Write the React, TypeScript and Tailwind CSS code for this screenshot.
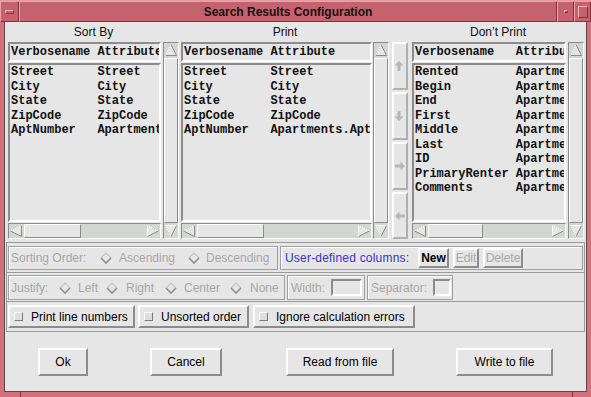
import React from "react";

const RAISED = "border-2 border-t-white border-l-white border-r-[#8c8c8c] border-b-[#8c8c8c]";
const RAISED1 = "border border-t-white border-l-white border-r-[#8c8c8c] border-b-[#8c8c8c]";
const SUNKEN = "border-2 border-t-[#8c8c8c] border-l-[#8c8c8c] border-r-white border-b-white";
const SUNKEN1 = "border border-t-[#8c8c8c] border-l-[#8c8c8c] border-r-white border-b-white";
const PANEL = "border border-[#a0a0a0] shadow-[inset_1px_1px_0_#ffffff]";
const MONO = "font-['Liberation_Mono',monospace] text-[12px] font-bold text-[#111111]";

type Dir = "up" | "down" | "left" | "right";

function Tri({ dir }: { dir: Dir }) {
  const map = {
    up: { pts: "7,1.5 12.5,12.5 1.5,12.5", light: "M1.5,12.5 L7,1.5" },
    down: { pts: "1.5,1.5 12.5,1.5 7,12.5", light: "M1.5,1.5 L12.5,1.5 M1.5,1.5 L7,12.5" },
    left: { pts: "1.5,7 12.5,1.5 12.5,12.5", light: "M1.5,7 L12.5,1.5" },
    right: { pts: "1.5,1.5 12.5,7 1.5,12.5", light: "M1.5,12.5 L1.5,1.5 L12.5,7" },
  }[dir];
  return (
    <svg width="14" height="14" viewBox="0 0 14 14" className="block shrink-0">
      <polygon points={map.pts} fill="#e6e6e6" stroke="#8c8c8c" strokeWidth="1" />
      <path d={map.light} stroke="#ffffff" strokeWidth="1" fill="none" />
    </svg>
  );
}

function VScroll() {
  return (
    <div className={`w-[16px] h-full flex flex-col bg-[#d3d6d3] ${SUNKEN1}`}>
      <Tri dir="up" />
      <div className={`flex-1 my-[1px] bg-[#e6e6e6] ${RAISED1}`} />
      <Tri dir="down" />
    </div>
  );
}

function HScroll({ slider }: { slider: string }) {
  return (
    <div className={`h-[16px] flex bg-[#d3d6d3] ${SUNKEN1}`}>
      <Tri dir="left" />
      <div className={`${slider} ml-[1px] bg-[#e6e6e6] ${RAISED1}`} />
      <div className="flex-1" />
      <Tri dir="right" />
    </div>
  );
}

function ListCol({
  w,
  col,
  rows,
  slider,
}: {
  w: string;
  col: number;
  rows: [string, string][];
  slider: string;
}) {
  return (
    <div className={`${w} h-full flex flex-col`}>
      <div className={`h-[20px] ${SUNKEN} flex items-center pl-[1px] overflow-hidden whitespace-pre ${MONO}`}>
        {"Verbosename".padEnd(col) + "Attribute"}
      </div>
      <div className={`mt-[1px] flex-1 ${SUNKEN} pl-[1px] overflow-hidden ${MONO}`}>
        {rows.map(([a, b]) => (
          <div key={a} className="h-[14.5px] leading-[14.5px] whitespace-pre">
            {a.padEnd(col) + b}
          </div>
        ))}
      </div>
      <div className="mt-[1px]">
        <HScroll slider={slider} />
      </div>
    </div>
  );
}

function Diamond() {
  return (
    <svg width="12" height="12" viewBox="0 0 12 12" className="block shrink-0">
      <polygon points="6,1 11,6 6,11 1,6" fill="#e6e6e6" />
      <path d="M1,6 L6,1 L11,6" stroke="#c4c4c4" strokeWidth="1.2" fill="none" />
      <path d="M1,6 L6,11 L11,6" stroke="#8e8e8e" strokeWidth="1.6" fill="none" />
    </svg>
  );
}

function MoveArrow({ dir }: { dir: Dir }) {
  const paths = {
    up: "M5,1 L9.5,5.5 L6.5,5.5 L6.5,11 L3.5,11 L3.5,5.5 L0.5,5.5 Z",
    down: "M5,11 L9.5,6.5 L6.5,6.5 L6.5,1 L3.5,1 L3.5,6.5 L0.5,6.5 Z",
    right: "M11,6 L6.5,1.5 L6.5,4.5 L1,4.5 L1,7.5 L6.5,7.5 L6.5,10.5 Z",
    left: "M1,6 L5.5,1.5 L5.5,4.5 L11,4.5 L11,7.5 L5.5,7.5 L5.5,10.5 Z",
  };
  return (
    <svg width="12" height="12" viewBox="0 0 12 12" className="block">
      <path d={paths[dir]} fill="#b6b6b6" />
    </svg>
  );
}

function MoveBtn({ dir, h }: { dir: Dir; h: string }) {
  return (
    <div
      className={`${h} w-[16px] flex items-center justify-center border-2 border-t-white border-l-white border-r-[#b0b0b0] border-b-[#b0b0b0]`}
    >
      <MoveArrow dir={dir} />
    </div>
  );
}

function Toggle({ w, label, ml }: { w: string; label: string; ml: string }) {
  return (
    <div className={`${w} ${ml} h-[23px] flex items-center ${RAISED} text-[#000000]`}>
      <div className="ml-[4px] w-[9px] h-[9px] border border-t-white border-l-white border-r-[#7c7c7c] border-b-[#7c7c7c] bg-[#dedede]" />
      <span className="ml-[8px] whitespace-nowrap">{label}</span>
    </div>
  );
}

function BigBtn({ w, ml, label }: { w: string; ml: string; label: string }) {
  return (
    <div className={`${w} ${ml} h-[28px] flex items-center justify-center ${RAISED} text-[#000000]`}>
      {label}
    </div>
  );
}

const sortRows: [string, string][] = [
  ["Street", "Street"],
  ["City", "City"],
  ["State", "State"],
  ["ZipCode", "ZipCode"],
  ["AptNumber", "Apartments.AptNumber"],
];

const dontRows: [string, string][] = [
  ["Rented", "Apartments.Rented"],
  ["Begin", "Apartments.Begin"],
  ["End", "Apartments.End"],
  ["First", "Apartments.First"],
  ["Middle", "Apartments.Middle"],
  ["Last", "Apartments.Last"],
  ["ID", "Apartments.ID"],
  ["PrimaryRenter", "Apartments.PrimaryRenter"],
  ["Comments", "Apartments.Comments"],
];

export default function App() {
  return (
    <div className="w-[591px] h-[397px] bg-[#d46f7b] flex flex-col font-['Liberation_Sans',Arial,sans-serif] text-[12px] overflow-hidden select-none">
      {/* Title bar */}
      <div className="h-[22px] shrink-0 flex bg-[#c4626d] border-t border-[#e79aa3]">
        <div className="w-[19px] h-full flex items-center justify-center border border-t-[#eaa2ab] border-l-[#eaa2ab] border-r-[#86323c] border-b-[#86323c]">
          <div className="w-[9px] h-[4px] border border-t-[#f0b4bb] border-l-[#f0b4bb] border-r-[#86323c] border-b-[#86323c]" />
        </div>
        <div className="flex-1 flex items-center justify-center font-bold text-[#1a1010] border border-t-[#eaa2ab] border-l-[#eaa2ab] border-r-[#86323c] border-b-[#86323c]">
          Search Results Configuration
        </div>
        <div className="w-[17px] h-full flex items-center justify-center border border-t-[#eaa2ab] border-l-[#eaa2ab] border-r-[#86323c] border-b-[#86323c]">
          <div className="w-[4px] h-[3px] border border-t-[#f0b4bb] border-l-[#f0b4bb] border-r-[#86323c] border-b-[#86323c]" />
        </div>
        <div className="w-[17px] h-full flex items-center justify-center border border-t-[#eaa2ab] border-l-[#eaa2ab] border-r-[#86323c] border-b-[#86323c]">
          <div className="w-[10px] h-[12px] border border-t-[#f0b4bb] border-l-[#f0b4bb] border-r-[#86323c] border-b-[#86323c]" />
        </div>
      </div>

      {/* Body */}
      <div className="flex-1 flex flex-col px-[4px]">
        <div className="flex-1 flex flex-col bg-[#e6e6e6] border-l border-r border-b border-[#5a4a4c]">
          {/* Lists */}
          <div className="flex pl-[3px] text-[#111111]">
            <div className="w-[171px] flex flex-col">
              <div className="h-[20px] flex items-center justify-center">Sort By</div>
              <div className="h-[197px] flex">
                <ListCol w="w-[153px]" col={12} rows={sortRows} slider="w-[57px]" />
                <div className="ml-[2px] h-full">
                  <VScroll />
                </div>
              </div>
            </div>
            <div className="ml-[2px] w-[208px] flex flex-col">
              <div className="h-[20px] flex items-center justify-center">Print</div>
              <div className="h-[197px] flex">
                <ListCol w="w-[191px]" col={12} rows={sortRows} slider="w-[67px]" />
                <div className="ml-[1px] h-full">
                  <VScroll />
                </div>
              </div>
            </div>
            <div className="ml-[3px] w-[16px] flex flex-col pt-[20px]">
              <div className="h-[197px] flex flex-col gap-[2px]">
                <MoveBtn dir="up" h="h-[48px]" />
                <MoveBtn dir="down" h="h-[48px]" />
                <MoveBtn dir="right" h="h-[48px]" />
                <MoveBtn dir="left" h="h-[47px]" />
              </div>
            </div>
            <div className="ml-[4px] w-[172px] flex flex-col">
              <div className="h-[20px] flex items-center justify-center">Don’t Print</div>
              <div className="h-[197px] flex">
                <ListCol w="w-[154px]" col={14} rows={dontRows} slider="w-[55px]" />
                <div className="ml-[2px] h-full">
                  <VScroll />
                </div>
              </div>
            </div>
          </div>

          {/* Lower option rows */}
          <div className="mt-[3px] mx-[1px] border-t border-l border-r border-[#9a9a9a]">
            {/* Row 1 */}
            <div className="flex pl-[1px] pt-[3px] pb-[2px] border-b border-[#9a9a9a]">
              <div className={`w-[270px] h-[24px] flex items-center ${PANEL} text-[#a6a6a6]`}>
                <span className="ml-[2px] w-[89px] whitespace-nowrap">Sorting Order:</span>
                <span className="w-[19px]"><Diamond /></span>
                <span className="w-[69px]">Ascending</span>
                <span className="w-[18px]"><Diamond /></span>
                <span className="whitespace-nowrap">Descending</span>
              </div>
              <div className={`ml-[2px] w-[303px] h-[24px] flex items-center ${PANEL}`}>
                <span className="ml-[4px] w-[133px] whitespace-nowrap text-[#3434c4] tracking-[0.2px]">User-defined columns:</span>
                <div className={`w-[31px] h-[20px] flex items-center justify-center ${RAISED} font-bold text-[#000000]`}>New</div>
                <div className={`ml-[4px] w-[26px] h-[20px] flex items-center justify-center ${RAISED} text-[#a6a6a6]`}>Edit</div>
                <div className={`ml-[4px] w-[40px] h-[20px] flex items-center justify-center ${RAISED} text-[#a6a6a6]`}>Delete</div>
              </div>
            </div>
            {/* Row 2 */}
            <div className="flex pl-[1px] pt-[2px] pb-[1px] border-b border-[#9a9a9a] text-[#a6a6a6]">
              <div className={`w-[277px] h-[25px] flex items-center ${PANEL}`}>
                <span className="ml-[2px] w-[48px] whitespace-nowrap">Justify:</span>
                <span className="w-[19px]"><Diamond /></span>
                <span className="w-[28px]">Left</span>
                <span className="w-[20px]"><Diamond /></span>
                <span className="w-[39px]">Right</span>
                <span className="w-[19px]"><Diamond /></span>
                <span className="w-[46px]">Center</span>
                <span className="w-[20px]"><Diamond /></span>
                <span>None</span>
              </div>
              <div className={`ml-[2px] w-[78px] h-[25px] flex items-center ${PANEL}`}>
                <span className="ml-[3px] w-[40px]">Width:</span>
                <div className={`w-[31px] h-[17px] ${SUNKEN}`} />
              </div>
              <div className={`ml-[2px] w-[86px] h-[25px] flex items-center ${PANEL}`}>
                <span className="ml-[3px] w-[62px] whitespace-nowrap">Separator:</span>
                <div className={`w-[18px] h-[17px] ${SUNKEN}`} />
              </div>
            </div>
            {/* Row 3 */}
            <div className="flex pl-[1px] pt-[3px] pb-[3px] border-b border-[#9a9a9a]">
              <Toggle w="w-[127px]" ml="ml-0" label="Print line numbers" />
              <Toggle w="w-[111px]" ml="ml-[3px]" label="Unsorted order" />
              <Toggle w="w-[162px]" ml="ml-[4px]" label="Ignore calculation errors" />
            </div>
          </div>

          {/* Buttons */}
          <div className="flex-1 flex pt-[16px]">
            <BigBtn w="w-[50px]" ml="ml-[33px]" label="Ok" />
            <BigBtn w="w-[72px]" ml="ml-[62px]" label="Cancel" />
            <BigBtn w="w-[108px]" ml="ml-[64px]" label="Read from file" />
            <BigBtn w="w-[97px]" ml="ml-[62px]" label="Write to file" />
          </div>
        </div>
        {/* bottom frame strip */}
        <div className="h-[5px] shrink-0 flex">
          <div className="w-[16px]" />
          <div className="w-[1px] h-full bg-[#86323c]" />
          <div className="flex-1" />
          <div className="w-[1px] h-full bg-[#86323c]" />
          <div className="w-[14px]" />
        </div>
      </div>
    </div>
  );
}
